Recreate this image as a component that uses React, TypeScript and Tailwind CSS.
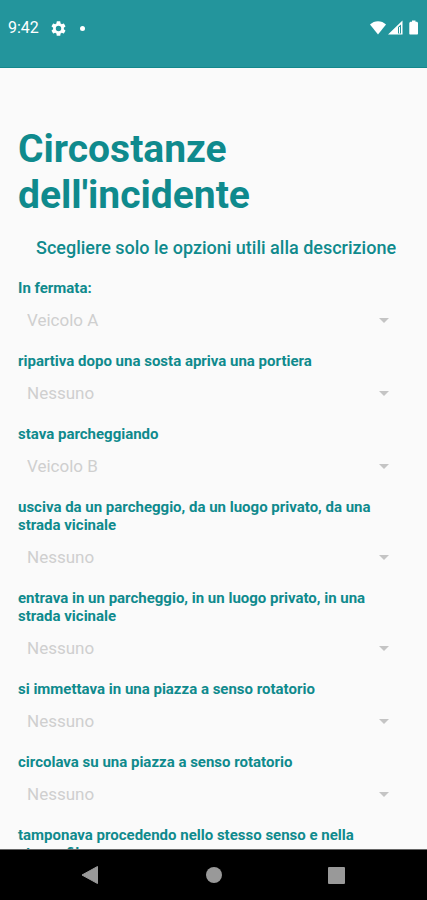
import { useState } from "react"

const options = ["Nessuno", "Veicolo A", "Veicolo B"]

const circumstances = [
  { id: "fermata", label: "In fermata:", value: "Veicolo A" },
  { id: "ripartiva", label: "ripartiva dopo una sosta apriva una portiera", value: "Nessuno" },
  { id: "parcheggiando", label: "stava parcheggiando", value: "Veicolo B" },
  {
    id: "usciva",
    label: "usciva da un parcheggio, da un luogo privato, da una strada vicinale",
    value: "Nessuno",
  },
  {
    id: "entrava",
    label: "entrava in un parcheggio, in un luogo privato, in una strada vicinale",
    value: "Nessuno",
  },
  { id: "immetteva", label: "si immettava in una piazza a senso rotatorio", value: "Nessuno" },
  { id: "circolava", label: "circolava su una piazza a senso rotatorio", value: "Nessuno" },
  {
    id: "tamponava",
    label: "tamponava procedendo nello stesso senso e nella stessa fila",
    value: "Nessuno",
  },
]

function StatusBar() {
  return (
    <header className="flex h-17 shrink-0 items-start justify-between border-b border-[#14888c] bg-[#23959c] pt-4 pr-[7px] pl-2 text-white">
      <div className="flex h-6 items-center">
        <span className="text-base">9:42</span>
        <svg className="ml-3 size-[15px]" viewBox="2 2 20 20" fill="currentColor" aria-hidden="true">
          <path d="M19.14 12.94c.04-.3.06-.61.06-.94 0-.32-.02-.64-.07-.94l2.03-1.58a.49.49 0 0 0 .12-.61l-1.92-3.32a.49.49 0 0 0-.59-.22l-2.39.96c-.5-.38-1.03-.7-1.62-.94l-.36-2.54a.48.48 0 0 0-.48-.41h-3.84a.47.47 0 0 0-.47.41l-.36 2.54c-.59.24-1.13.57-1.62.94l-2.39-.96a.48.48 0 0 0-.59.22L2.74 8.87c-.12.21-.08.47.12.61l2.03 1.58c-.05.3-.09.63-.09.94s.02.64.07.94l-2.03 1.58a.49.49 0 0 0-.12.61l1.92 3.32c.12.22.37.29.59.22l2.39-.96c.5.38 1.03.7 1.62.94l.36 2.54c.05.24.24.41.48.41h3.84c.24 0 .44-.17.47-.41l.36-2.54c.59-.24 1.13-.56 1.62-.94l2.39.96c.22.08.47 0 .59-.22l1.92-3.32a.47.47 0 0 0-.12-.61l-2.01-1.58zM12 15.6A3.6 3.6 0 1 1 12 8.400a3.600 3.600 0 0 1 0 7.200z" />
        </svg>
        <span className="ml-3.5 size-[5px] rounded-full bg-white" />
      </div>
      <div className="flex h-6 items-center">
        <svg className="size-4" viewBox="0 0 16 16" fill="currentColor" aria-hidden="true">
          <path d="M8 14.500 0 4.600C2.200 2.300 5 1.200 8 1.200s5.800 1.100 8 3.400z" />
        </svg>
        <svg className="ml-0.5 size-4" viewBox="0 0 16 16" fill="currentColor" aria-hidden="true">
          <path fillRule="evenodd" d="M0 14.500 14.500 .5v14zM10 7v6.500h3v-9z" />
          <path d="M11 7h1v6.500h-1z" />
        </svg>
        <svg className="ml-1 h-4 w-3" viewBox="0 0 12 16" fill="currentColor" aria-hidden="true">
          <path d="M4 .5h3.500v1.200h1c.9 0 1.500.6 1.500 1.500v10.300c0 .6-.4 1-1 1H2.300c-.6 0-1-.4-1-1V3.200c0-.9.700-1.500 1.600-1.500H4z" />
        </svg>
      </div>
    </header>
  )
}

function CircumstanceField({ id, label, value }: { id: string; label: string; value: string }) {
  const [selected, setSelected] = useState(value)

  return (
    <div className="pb-2">
      <label htmlFor={id} className="block pr-4 text-[15px] leading-[18px] font-bold text-[#0f8a8d]">
        {label}
      </label>
      <div className="grid h-[47px] items-center">
        <select
          id={id}
          disabled
          value={selected}
          onChange={(e) => setSelected(e.target.value)}
          className="col-start-1 row-start-1 h-full w-full appearance-none bg-transparent px-[9px] text-[17px] text-[#cfcfcf] opacity-100"
        >
          {options.map((option) => (
            <option key={option}>{option}</option>
          ))}
        </select>
        <svg
          className="pointer-events-none col-start-1 row-start-1 mr-5 h-[5px] w-[10px] justify-self-end text-[#c4c4c4]"
          viewBox="0 0 10 5"
          fill="currentColor"
          aria-hidden="true"
        >
          <path d="M0 0h10L5 5z" />
        </svg>
      </div>
    </div>
  )
}

function NavigationBar() {
  return (
    <nav className="grid h-[51px] shrink-0 grid-cols-[1fr_66px_1fr] items-center border-t border-[#666] bg-black text-[#999]">
      <button type="button" aria-label="Indietro" className="justify-self-center">
        <svg className="size-5" viewBox="0 0 20 20" fill="currentColor">
          <path d="M17.500 1.500v17L2 10z" stroke="currentColor" strokeLinejoin="round" />
        </svg>
      </button>
      <button type="button" aria-label="Home" className="justify-self-center">
        <svg className="size-4" viewBox="0 0 16 16" fill="currentColor">
          <circle cx="8" cy="8" r="8" />
        </svg>
      </button>
      <button type="button" aria-label="Recenti" className="justify-self-center">
        <svg className="size-[17px]" viewBox="0 0 17 17" fill="currentColor">
          <rect width="17" height="17" rx="1" />
        </svg>
      </button>
    </nav>
  )
}

export default function App() {
  return (
    <div className="flex h-screen flex-col bg-[#fafafa] font-['Roboto',sans-serif]">
      <StatusBar />
      <main className="min-h-0 flex-1 overflow-hidden px-[18px] pt-[58px]">
        <h1 className="text-[39px] leading-[46px] font-bold text-[#0f8a8d]">
          Circostanze dell'incidente
        </h1>
        <p className="pt-[18px] pb-[19px] pl-[18px] text-lg leading-6 font-medium text-[#0f8a8d]">
          Scegliere solo le opzioni utili alla descrizione
        </p>
        <form>
          {circumstances.map((item) => (
            <CircumstanceField key={item.id} {...item} />
          ))}
        </form>
      </main>
      <NavigationBar />
    </div>
  )
}
